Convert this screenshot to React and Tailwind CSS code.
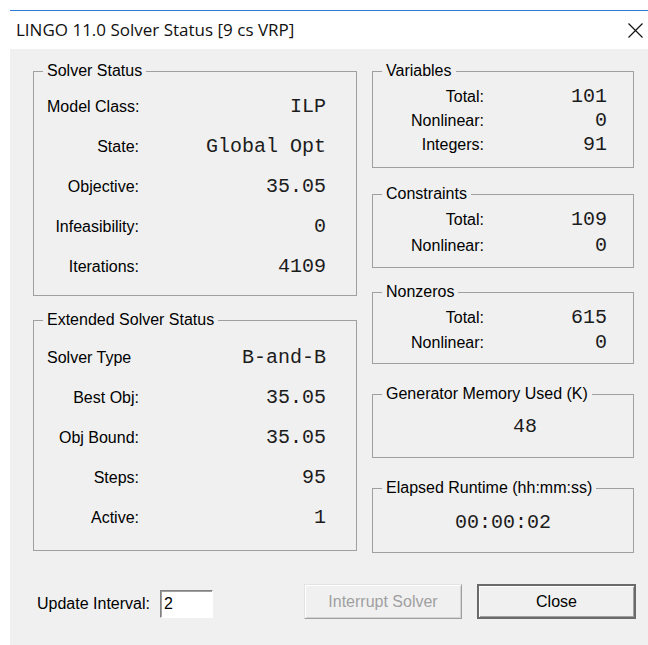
import React from "react";

const mono = "font-['Liberation_Mono','Courier_New',monospace] text-[20px] text-[#1c1c1c]";

function Group({ title, className = "", children }) {
  return (
    <fieldset className={`border border-[#a0a0a0] p-0 ${className}`}>
      <legend className="ml-[9px] px-[4px] text-[16px] leading-[18px]">{title}</legend>
      {children}
    </fieldset>
  );
}

// left-hand boxes: 40px rows, label column ends at the same edge
function BigRow({ label, value, alignLeft }) {
  return (
    <div className="flex h-[40px] items-center">
      <span className={`w-[92px] whitespace-nowrap text-[16px] ${alignLeft ? "text-left" : "text-right"}`}>{label}</span>
      <span className={`flex-1 text-right ${mono}`}>{value}</span>
    </div>
  );
}

function SmallRow({ label, value, h = "h-[24px]" }) {
  return (
    <div className={`flex items-center ${h}`}>
      <span className="w-[111px] whitespace-nowrap text-right text-[16px]">{label}</span>
      <span className={`flex-1 pr-[26px] text-right ${mono}`}>{value}</span>
    </div>
  );
}

export default function App() {
  return (
    <div className="min-h-screen bg-white pl-[10px] pt-[10px] font-['Liberation_Sans',Arial,sans-serif] text-black">
      <div className="border-t border-[#2b7bd4]">
        {/* title bar */}
        <div className="flex h-[38px] items-center justify-between bg-white pl-[6px] pr-[5px]">
          <span className="font-['Open_Sans',sans-serif] text-[17px] text-[#111]">
            LINGO 11.0 Solver Status [9 cs VRP]
          </span>
          <svg width="15" height="15" viewBox="0 0 15 15" aria-label="Close">
            <path d="M0.5 0.5 L14.5 14.5 M14.5 0.5 L0.5 14.5" stroke="#111" strokeWidth="1.2" fill="none" />
          </svg>
        </div>

        {/* dialog body */}
        <div className="h-[596px] bg-[#f0f0f0] pl-[23px] pt-[13px]">
          <div className="flex gap-[15px]">
            <div className="flex w-[324px] flex-col">
              <Group title="Solver Status" className="h-[234px]">
                <div className="pl-[13px] pr-[30px] pt-[7px]">
                  <BigRow label="Model Class:" value="ILP" />
                  <BigRow label="State:" value="Global Opt" />
                  <BigRow label="Objective:" value="35.05" />
                  <BigRow label="Infeasibility:" value="0" />
                  <BigRow label="Iterations:" value="4109" />
                </div>
              </Group>
              <Group title="Extended Solver Status" className="mt-[15px] h-[240px]">
                <div className="pl-[13px] pr-[30px] pt-[9px]">
                  <BigRow label="Solver Type" value="B-and-B" alignLeft />
                  <BigRow label="Best Obj:" value="35.05" />
                  <BigRow label="Obj Bound:" value="35.05" />
                  <BigRow label="Steps:" value="95" />
                  <BigRow label="Active:" value="1" />
                </div>
              </Group>
            </div>

            <div className="flex w-[262px] flex-col">
              <Group title="Variables" className="h-[106px]">
                <div className="pt-[5px]">
                  <SmallRow label="Total:" value="101" />
                  <SmallRow label="Nonlinear:" value="0" />
                  <SmallRow label="Integers:" value="91" />
                </div>
              </Group>
              <Group title="Constraints" className="mt-[17px] h-[83px]">
                <div className="pt-[4px]">
                  <SmallRow label="Total:" value="109" h="h-[26px]" />
                  <SmallRow label="Nonlinear:" value="0" h="h-[26px]" />
                </div>
              </Group>
              <Group title="Nonzeros" className="mt-[15px] h-[81px]">
                <div className="pt-[4px]">
                  <SmallRow label="Total:" value="615" h="h-[25px]" />
                  <SmallRow label="Nonlinear:" value="0" h="h-[25px]" />
                </div>
              </Group>
              <Group title="Generator Memory Used (K)" className="mt-[21px] h-[73px]">
                <div className={`mt-[12px] h-[24px] pl-[44px] text-center leading-[24px] ${mono}`}>48</div>
              </Group>
              <Group title="Elapsed Runtime (hh:mm:ss)" className="mt-[21px] h-[74px]">
                <div className={`mt-[14px] h-[24px] text-center leading-[24px] ${mono}`}>00:00:02</div>
              </Group>
            </div>
          </div>

          {/* bottom controls */}
          <div className="mt-[31px] flex h-[35px] items-start">
            <span className="ml-[4px] mt-[6px] h-[28px] w-[123px] text-[16px] leading-[28px]">Update Interval:</span>
            <input
              defaultValue="2"
              className="mt-[6px] h-[28px] w-[53px] border border-b-white border-l-[#828282] border-r-white border-t-[#828282] bg-white pl-[3px] text-[16px] shadow-[inset_1px_1px_0_#a0a0a0] outline-none"
            />
            <button
              type="button"
              disabled
              className="ml-[91px] h-[35px] w-[158px] border border-b-[#a0a0a0] border-l-[#e3e3e3] border-r-[#a0a0a0] border-t-[#e3e3e3] bg-[#f0f0f0] text-[16px] text-[#a0a0a0] shadow-[inset_1px_1px_0_#fff,inset_-1px_-1px_0_#d4d4d4]"
            >
              Interrupt Solver
            </button>
            <button
              type="button"
              className="ml-[15px] h-[35px] w-[159px] border-2 border-[#6a6a6a] bg-[#f0f0f0] text-[16px] text-black shadow-[inset_1px_1px_0_#fff,inset_-1px_-1px_0_#a0a0a0]"
            >
              Close
            </button>
          </div>
        </div>
      </div>
    </div>
  );
}
